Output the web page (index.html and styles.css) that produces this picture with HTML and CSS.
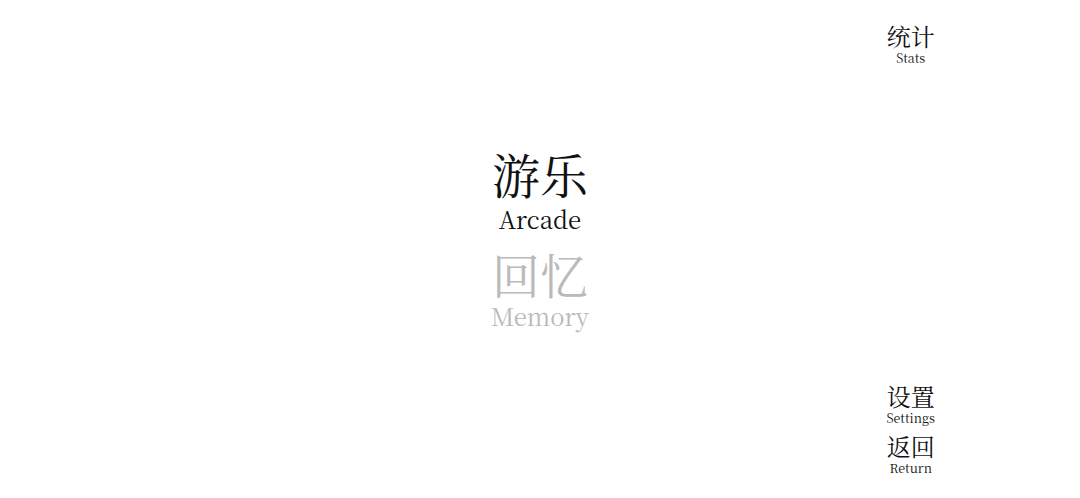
FILE: index.html
```html
<!DOCTYPE html>
<html lang="zh">
<head>
<meta charset="utf-8">
<title>Menu</title>
<link rel="stylesheet" href="styles.css">
</head>
<body>
<div class="screen">
  <div class="spacer"></div>
  <main class="menu">
    <div class="item active">
      <div class="zh">游乐</div>
      <div class="en">Arcade</div>
    </div>
    <div class="item dim">
      <div class="zh">回忆</div>
      <div class="en">Memory</div>
    </div>
  </main>
  <aside class="side">
    <div class="btn">
      <div class="zh">统计</div>
      <div class="en">Stats</div>
    </div>
    <div class="bottom">
      <div class="btn">
        <div class="zh">设置</div>
        <div class="en">Settings</div>
      </div>
      <div class="btn">
        <div class="zh">返回</div>
        <div class="en">Return</div>
      </div>
    </div>
  </aside>
</div>
</body>
</html>
```
FILE: styles.css
```css
html, body {
  margin: 0;
  padding: 0;
  background: #fff;
}
body {
  font-family: "Noto Serif CJK SC", "Noto Serif", "DejaVu Serif", "Liberation Serif", "Noto Sans CJK SC", serif;
  color: #111;
}
.screen {
  width: 1080px;
  height: 498px;
  display: grid;
  grid-template-columns: 1fr auto 1fr;
}
.menu {
  display: flex;
  flex-direction: column;
  align-items: center;
  justify-content: center;
  gap: 13px;
  padding-bottom: 25px;
}
.item {
  display: flex;
  flex-direction: column;
  align-items: center;
}
.item .zh {
  font-size: 48px;
  line-height: 62px;
}
.item .en {
  font-size: 24px;
  line-height: 28px;
}
.item.dim {
  color: #bababa;
}
.item.dim .zh {
  line-height: 56px;
}
.side {
  justify-self: end;
  margin-right: 145px;
  display: flex;
  flex-direction: column;
  justify-content: space-between;
  align-items: center;
  padding: 22px 0 22px;
}
.bottom {
  display: flex;
  flex-direction: column;
  gap: 6px;
}
.btn {
  display: flex;
  flex-direction: column;
  align-items: center;
}
.btn .zh {
  font-size: 24px;
  line-height: 28px;
}
.btn .en {
  font-size: 12.5px;
  line-height: 16px;
}
```
